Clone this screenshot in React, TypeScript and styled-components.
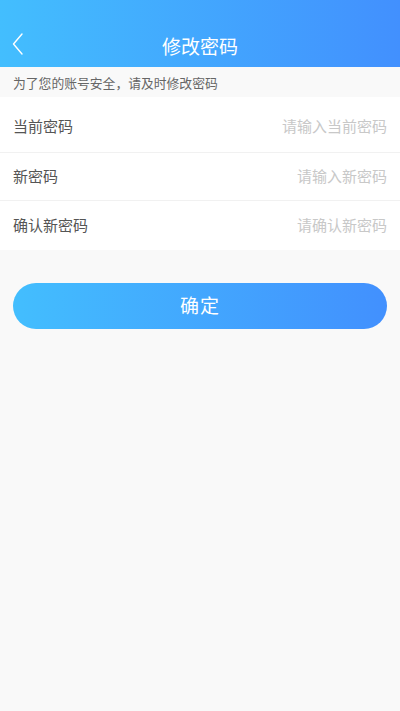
import React from 'react';
import styled, { createGlobalStyle } from 'styled-components';

const GlobalStyle = createGlobalStyle`
  html, body {
    margin: 0;
    padding: 0;
    background: #f9f9f9;
    font-family: "Noto Sans CJK SC", "Noto Sans", sans-serif;
  }
`;

const Page = styled.div`
  width: 400px;
  min-height: 711px;
  background: #f9f9f9;
  display: flex;
  flex-direction: column;
`;

const Header = styled.div`
  height: 67px;
  background: linear-gradient(90deg, #43befe 0%, #4290fe 100%);
  display: flex;
  align-items: flex-end;
  justify-content: center;
  position: relative;
  padding-bottom: 8px;
  box-sizing: border-box;
`;

const Title = styled.h1`
  margin: 0;
  font-size: 19px;
  font-weight: 400;
  color: #fff;
  line-height: 26px;
`;

const Back = styled.div`
  position: absolute;
  left: 12px;
  top: 33px;
  width: 12px;
  height: 22px;
  display: flex;
  align-items: center;
`;

const Tip = styled.div`
  height: 30px;
  padding-left: 13px;
  display: flex;
  align-items: center;
  font-size: 12.8px;
  color: #666;
`;

const Form = styled.div`
  background: #fff;
  display: flex;
  flex-direction: column;
`;

const Row = styled.div<{ first?: boolean; last?: boolean }>`
  box-sizing: border-box;
  height: ${p => (p.first ? 56 : p.last ? 49 : 48)}px;
  padding: ${p => (p.first ? 5 : 0)}px 13px 3px;
  display: flex;
  align-items: center;
  justify-content: space-between;
  border-bottom: ${p => (p.last ? 'none' : '1px solid #f1f1f1')};
`;

const Label = styled.span`
  font-size: 15px;
  color: #555;
`;

const Input = styled.input`
  border: none;
  outline: none;
  text-align: right;
  font-family: inherit;
  font-size: 15px;
  color: #333;
  width: 200px;
  padding: 0;
  background: transparent;
  &::placeholder {
    color: #c8c8c8;
  }
`;

const Submit = styled.button`
  margin: 33px 13px 0;
  height: 46px;
  padding: 0 0 3px;
  border: none;
  border-radius: 23px;
  background: linear-gradient(90deg, #43befe 0%, #4290fe 100%);
  color: #fff;
  font-family: inherit;
  font-size: 19px;
  letter-spacing: 1px;
`;

const fields = [
  { label: '当前密码', placeholder: '请输入当前密码' },
  { label: '新密码', placeholder: '请输入新密码' },
  { label: '确认新密码', placeholder: '请确认新密码' },
];

export default function App() {
  return (
    <Page>
      <GlobalStyle />
      <Header>
        <Back>
          <svg width="11" height="22" viewBox="0 0 11 22" fill="none">
            <path d="M10 1 L1.5 11 L10 21" stroke="#fff" strokeWidth="1.4" strokeLinecap="round" strokeLinejoin="round" />
          </svg>
        </Back>
        <Title>修改密码</Title>
      </Header>
      <Tip>为了您的账号安全，请及时修改密码</Tip>
      <Form>
        {fields.map((f, i) => (
          <Row key={f.label} first={i === 0} last={i === fields.length - 1}>
            <Label>{f.label}</Label>
            <Input type="password" placeholder={f.placeholder} />
          </Row>
        ))}
      </Form>
      <Submit>确定</Submit>
    </Page>
  );
}
